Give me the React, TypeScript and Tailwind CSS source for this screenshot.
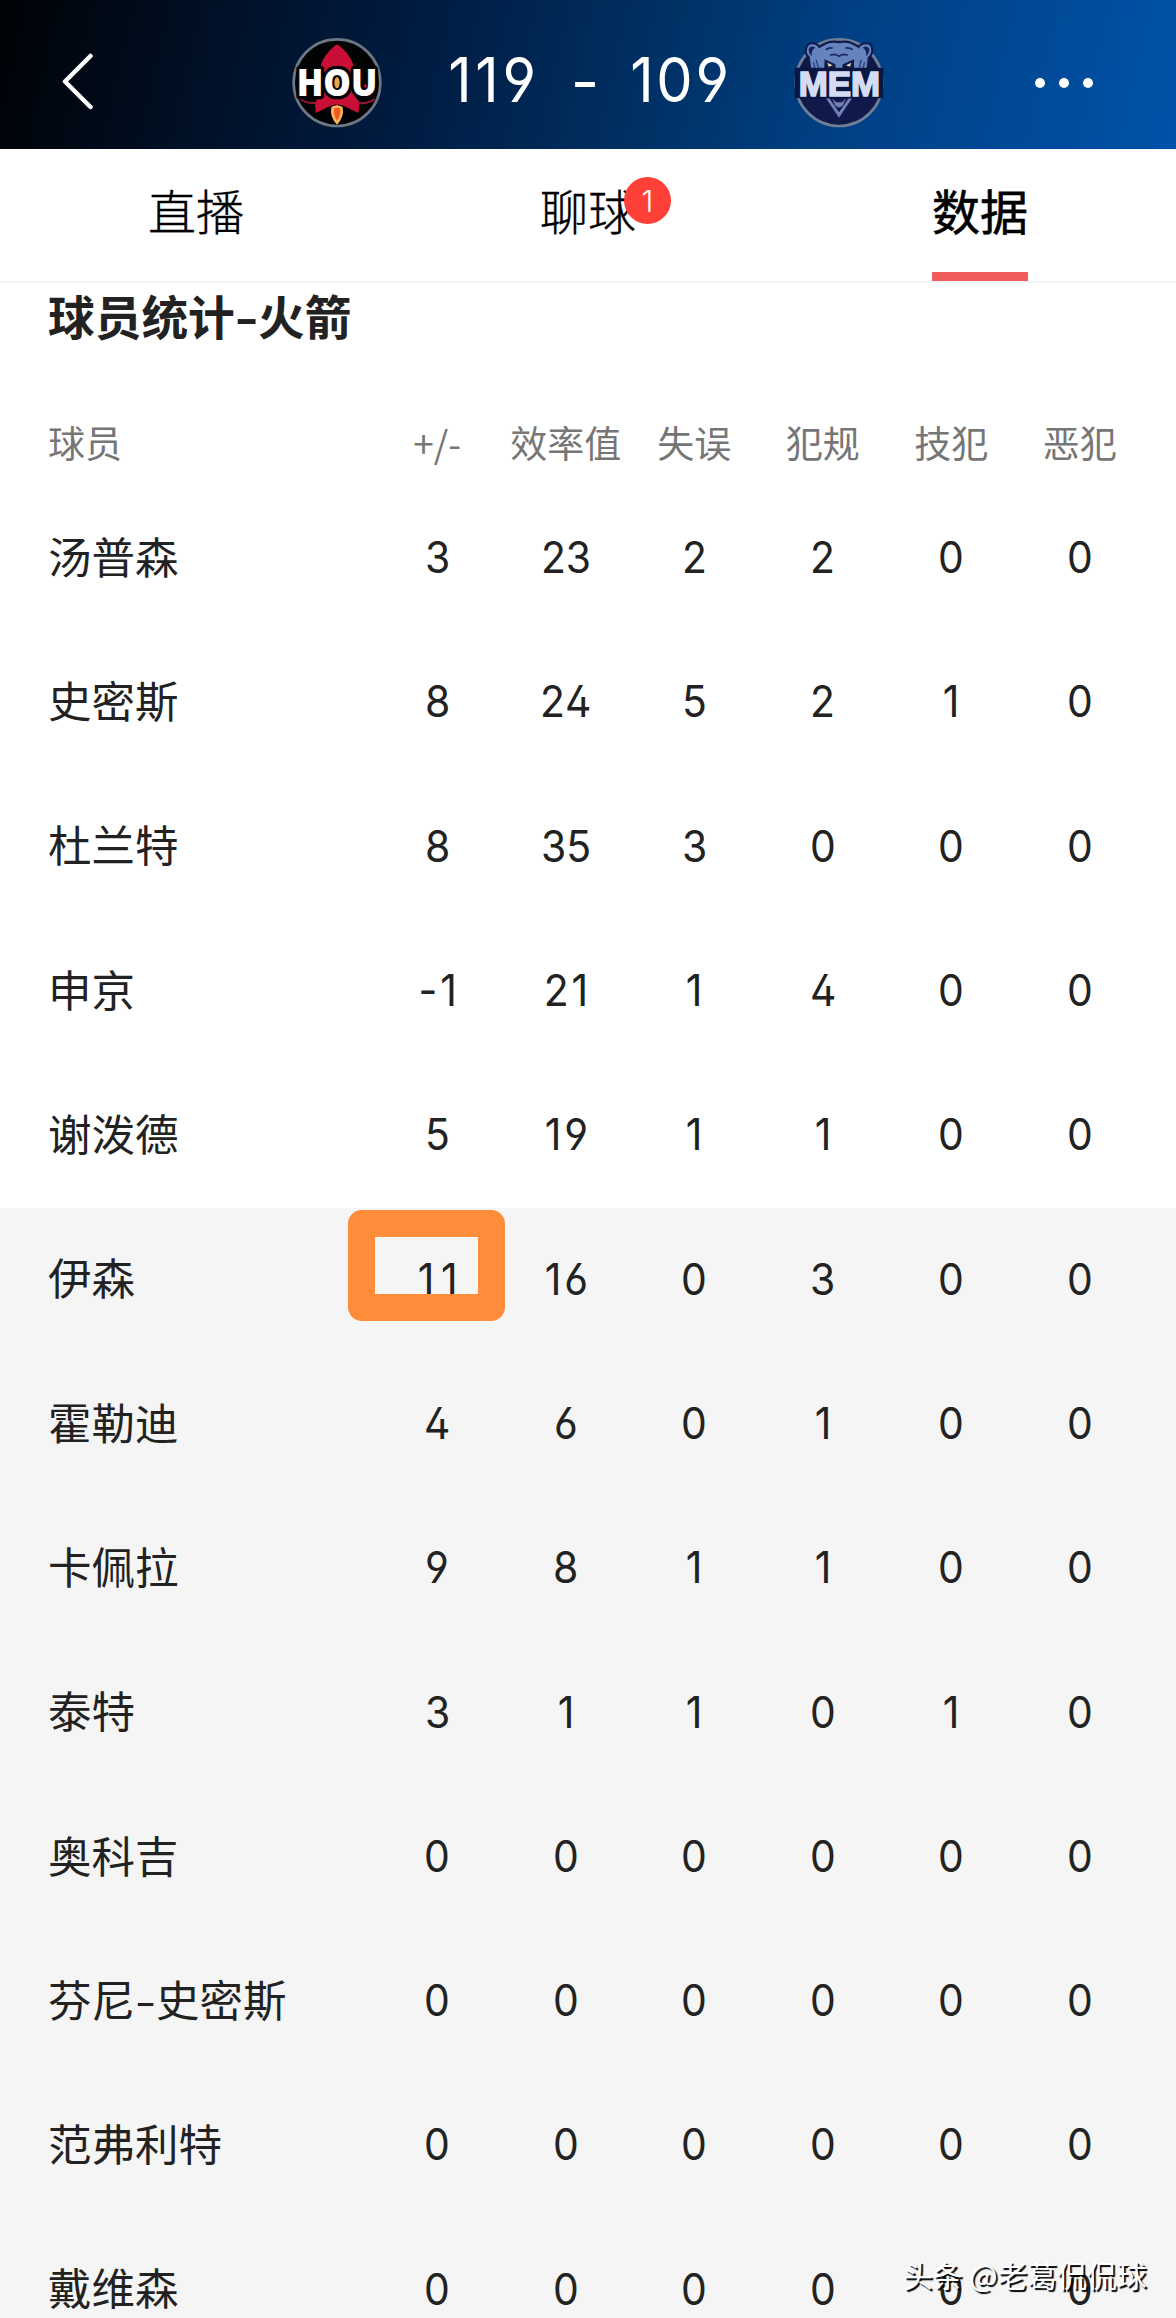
import clsx from 'clsx';

interface PlayerStat {
  name: string;
  values: string[];
  bench?: boolean;
  highlight?: boolean;
}

const TABS = [
  { label: '直播', badge: 0, active: false },
  { label: '聊球', badge: 1, active: false },
  { label: '数据', badge: 0, active: true },
];

const COLUMNS = ['+/-', '效率值', '失误', '犯规', '技犯', '恶犯'];

const PLAYERS: PlayerStat[] = [
  { name: '汤普森', values: ['3', '23', '2', '2', '0', '0'] },
  { name: '史密斯', values: ['8', '24', '5', '2', '1', '0'] },
  { name: '杜兰特', values: ['8', '35', '3', '0', '0', '0'] },
  { name: '申京', values: ['-1', '21', '1', '4', '0', '0'] },
  { name: '谢泼德', values: ['5', '19', '1', '1', '0', '0'] },
  { name: '伊森', values: ['11', '16', '0', '3', '0', '0'], bench: true, highlight: true },
  { name: '霍勒迪', values: ['4', '6', '0', '1', '0', '0'], bench: true },
  { name: '卡佩拉', values: ['9', '8', '1', '1', '0', '0'], bench: true },
  { name: '泰特', values: ['3', '1', '1', '0', '1', '0'], bench: true },
  { name: '奥科吉', values: ['0', '0', '0', '0', '0', '0'], bench: true },
  { name: '芬尼-史密斯', values: ['0', '0', '0', '0', '0', '0'], bench: true },
  { name: '范弗利特', values: ['0', '0', '0', '0', '0', '0'], bench: true },
  { name: '戴维森', values: ['0', '0', '0', '0', '0', '0'], bench: true },
];

function RocketsLogo() {
  return (
    <svg width="120" height="115" viewBox="0 0 360 345" className="shrink-0">
      <circle cx="171" cy="173" r="130" fill="#020304" stroke="#6d7683" strokeWidth="8" />
      <path d="M171 58 C146 74 122 106 120 136 L120 214 L105 232 L107 264 L132 252 L171 236 L210 252 L235 264 L239 232 L224 214 L224 136 C220 106 197 74 171 58 Z" fill="#c90f36" />
      <path d="M60 222 Q80 236 108 234 M284 222 Q262 238 234 234" fill="none" stroke="#9d1531" strokeWidth="6" />
      <path d="M134 252 Q171 226 210 252 L196 262 L148 262 Z" fill="#020304" />
      <path d="M171 228 L171 246 M150 236 Q171 226 193 236" fill="none" stroke="#c90f36" strokeWidth="5" />
      <path d="M154 246 Q171 236 188 246 Q194 275 171 299 Q148 275 154 246 Z" fill="#f9b25e" />
      <path d="M163 250 Q171 246 180 250 Q184 270 171 287 Q159 270 163 250 Z" fill="#f2591f" />
      <text x="50" y="212" textLength="242" lengthAdjust="spacingAndGlyphs" fontFamily="Open Sans, Noto Sans, sans-serif" fontWeight="800" fontSize="110" fill="#fff" stroke="#020304" strokeWidth="20" strokeLinejoin="round" paintOrder="stroke">
        HOU
      </text>
      <ellipse cx="171" cy="173" rx="11" ry="21" fill="#020304" />
      <ellipse cx="171" cy="173" rx="8" ry="17" fill="#e3a84e" />
      <circle cx="256" cy="183" r="5" fill="#a5122f" />
    </svg>
  );
}

function GrizzliesLogo() {
  return (
    <svg width="120" height="115" viewBox="0 0 360 345" className="shrink-0">
      <circle cx="177" cy="173" r="130" fill="#11184a" stroke="#6f7f98" strokeWidth="8" />
      <path d="M92 140 L86 96 C70 84 78 52 98 55 Q112 56 118 66 Q148 44 177 52 Q206 44 236 66 Q242 56 258 55 C278 52 284 84 266 98 L262 140 Z" fill="#6683bf" stroke="#111b4b" strokeWidth="6" />
      <path d="M86 72 Q94 60 106 68 Q92 76 96 94 Q86 86 86 72 Z M268 72 Q260 60 248 68 Q262 76 258 94 Q268 86 268 72 Z" fill="#17235b" />
      <path d="M137 74 Q150 66 158 70 M196 70 Q206 66 218 74 M150 90 L166 88 L177 94 L188 88 L204 90" fill="none" stroke="#1a2860" strokeWidth="5" />
      <path d="M134 103 L166 118 L168 140 L132 140 Z M222 103 L188 118 L186 140 L222 140 Z" fill="#111b45" />
      <path d="M142 113 L158 121 L146 125 Z M214 113 L198 121 L210 125 Z" fill="#dcd8bd" />
      <path d="M108 104 L116 128 M100 112 L106 134 M244 104 L238 128 M254 112 L248 134" stroke="#28407f" strokeWidth="4" />
      <path d="M138 220 L177 278 L216 220 L206 220 L177 262 L148 220 Z" fill="#7180b5" />
      <path d="M156 220 L168 232 L186 232 L198 220 L188 242 L177 248 L166 242 Z" fill="#7180b5" />
      <rect x="44" y="128" width="266" height="92" rx="6" fill="#0a1740" />
      <text x="56" y="212" textLength="244" lengthAdjust="spacingAndGlyphs" fontFamily="Liberation Sans, Arial, sans-serif" fontWeight="700" fontSize="104" fill="#d3dcf3" stroke="#d3dcf3" strokeWidth="5">
        MEM
      </text>
    </svg>
  );
}

function ScoreHeader() {
  return (
    <header className="flex h-[149px] items-center bg-[linear-gradient(103deg,#000205_0%,#001026_18%,#001c42_36%,#002b5a_50%,#003f82_70%,#0052a9_100%)] pt-4 text-white">
      <div className="w-[280px] shrink-0 pl-[60px]">
        <svg width="36" height="60" viewBox="0 0 36 60" fill="none" stroke="currentColor" strokeWidth="4.5" strokeLinecap="round" strokeLinejoin="round">
          <path d="M30.5 3 L5 28.5 L30.5 54" />
        </svg>
      </div>
      <RocketsLogo />
      <div className="flex h-[76px] w-[380px] shrink-0 pl-[25px] text-center font-[Inter,sans-serif] text-[62px] leading-[70px] font-normal tracking-[2px] [font-feature-settings:'cv03','cv04'] [font-kerning:none]">
        <span className="w-[138px] scale-x-93 tracking-[4px]">119</span>
        <span className="w-[46px] pt-0.5">-</span>
        <span className="w-[144px] scale-x-93 tracking-[3px]">109</span>
      </div>
      <GrizzliesLogo />
      <svg width="60" height="12" viewBox="0 0 60 12" fill="currentColor" className="ml-[134px]">
        <circle cx="6" cy="6" r="5" />
        <circle cx="30" cy="6" r="5" />
        <circle cx="54" cy="6" r="5" />
      </svg>
    </header>
  );
}

function TabBar() {
  return (
    <nav className="grid h-[134px] grid-cols-3 border-b-2 border-[#f4f4f4]">
      {TABS.map((tab) => (
        <div key={tab.label} className="flex flex-col items-center justify-between">
          <div
            className={clsx(
              'relative pt-9 text-[48px] leading-[48px] text-black',
              tab.active ? 'font-normal [-webkit-text-stroke:0.6px_#000]' : 'font-light [-webkit-text-stroke:0.35px_#000]'
            )}
          >
            {tab.label}
            {tab.badge > 0 && (
              <span className="absolute top-7 left-[84px] flex size-[47px] items-center justify-center rounded-full bg-[#ff4038] font-[Inter,sans-serif] text-[30px] text-white [-webkit-text-stroke:0]">
                {tab.badge}
              </span>
            )}
          </div>
          {tab.active && <div className="h-[9px] w-24 bg-[#f05b5b]" />}
        </div>
      ))}
    </nav>
  );
}

// Hyphen drawn a bit wider than the font's own
function WideHyphenText({ text }: { text: string }) {
  const [before, after] = text.split('-');
  if (after === undefined) return <>{text}</>;
  return (
    <>
      {before}
      <span className="mx-[3px] inline-block scale-x-140">-</span>
      {after}
    </>
  );
}

// The "1" is narrow, so pairs that hold one are spaced out to keep an even pitch
function valueTracking(value: string) {
  if (value === '11') return 'tracking-[7px] -mr-[7px]';
  if (value.length > 1 && value.includes('1')) return 'tracking-[3px] -mr-[3px]';
  return '';
}

function PlayerRow({ player }: { player: PlayerStat }) {
  return (
    <div
      className={clsx(
        'grid h-[144.3px] grid-cols-[325px_repeat(6,128.5px)] items-center pl-12 text-[44px] leading-none text-[#222]',
        player.bench && 'bg-[#f5f5f5]'
      )}
    >
      <div className="pb-1.5 text-[43.5px] whitespace-nowrap">
        <WideHyphenText text={player.name} />
      </div>
      {player.values.map((value, index) => (
        <div key={index} className="relative pb-[3px] text-center font-[Inter,sans-serif]">
          <span
            className={clsx(
              "inline-block scale-x-93 [font-feature-settings:'cv02','cv03','cv04'] [font-kerning:none]",
              valueTracking(value)
            )}
          >
            {value}
          </span>
          {player.highlight && index === 0 && (
            <span className="absolute -top-[47px] -left-[25px] h-[111px] w-[157px] rounded-[14px] border-[27px] border-[#ff8c3a]" />
          )}
        </div>
      ))}
    </div>
  );
}

export default function App() {
  return (
    <div className="relative h-[2318px] w-[1176px] overflow-hidden bg-white font-['Noto_Sans_CJK_SC',sans-serif]">
      <ScoreHeader />
      <TabBar />

      <section>
        <h2 className="h-[120px] pt-2 pl-12 text-[46.7px] leading-[47px] font-bold text-[#222]">
          <WideHyphenText text="球员统计-火箭" />
        </h2>
        <div className="grid h-[83.5px] grid-cols-[325px_repeat(6,128.5px)] items-start pt-[18px] pl-12 text-[37px] leading-[42px] text-[#767676]">
          <div>球员</div>
          {COLUMNS.map((column) => (
            <div key={column} className="text-center whitespace-nowrap">
              {column}
            </div>
          ))}
        </div>
        {PLAYERS.map((player) => (
          <PlayerRow key={player.name} player={player} />
        ))}
      </section>

      <div className="absolute top-[2256px] left-[903px] text-[29.8px] leading-9 whitespace-nowrap text-white [text-shadow:2px_2px_1px_#000]">
        头条 @老葛侃侃球
      </div>
    </div>
  );
}
